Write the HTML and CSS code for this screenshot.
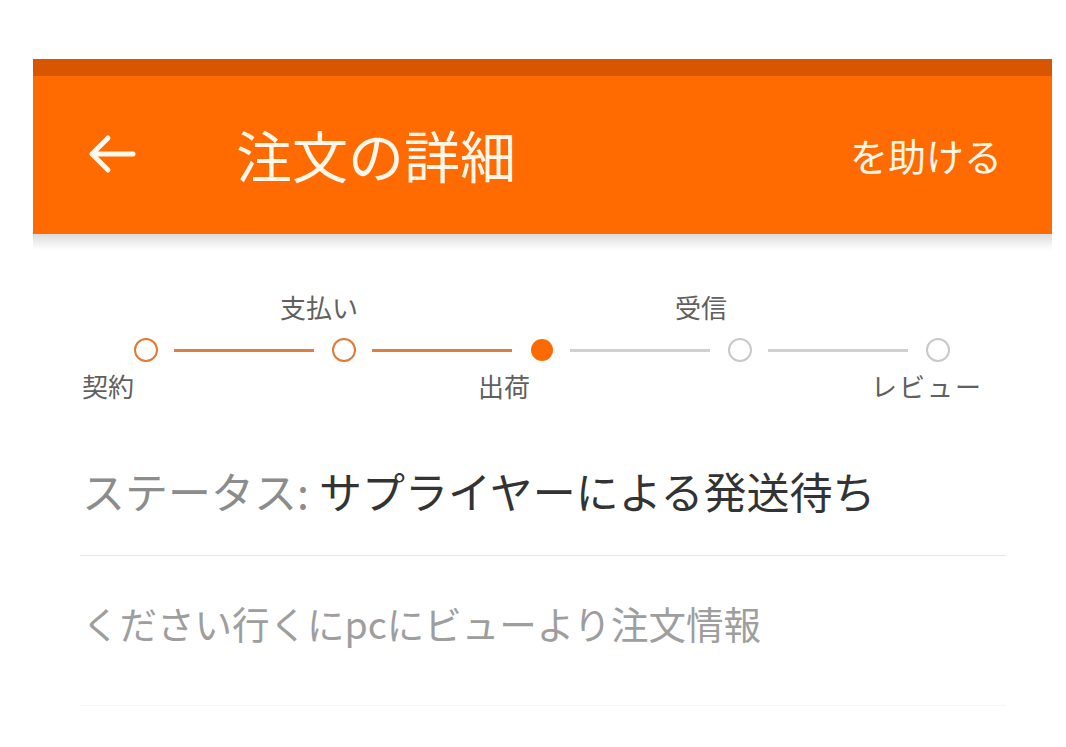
FILE: index.html
```html
<!DOCTYPE html>
<html lang="ja">
<head>
<meta charset="utf-8">
<title>注文の詳細</title>
<link rel="stylesheet" href="styles.css">
</head>
<body>
<div class="page">
  <header class="appbar">
    <div class="statusbar"></div>
    <div class="toolbar">
      <svg class="back" viewBox="0 0 48 40" width="48" height="40" aria-hidden="true">
        <path d="M4 20 H45 M20 4 L4 20 L20 36" fill="none" stroke="#fff8ec" stroke-width="5" stroke-linecap="round" stroke-linejoin="round"/>
      </svg>
      <h1 class="title">注文の詳細</h1>
      <span class="help">を助ける</span>
    </div>
  </header>
  <div class="bar-shadow"></div>

  <section class="stepper">
    <div class="labels top">
      <span></span><span>支払い</span><span></span><span>受信</span><span></span>
    </div>
    <div class="track">
      <span class="dot done"></span><span class="line done"></span>
      <span class="dot done"></span><span class="line done"></span>
      <span class="dot active"></span><span class="line"></span>
      <span class="dot"></span><span class="line"></span>
      <span class="dot"></span>
    </div>
    <div class="labels bottom">
      <span>契約</span><span></span><span>出荷</span><span></span><span class="wide">レビュー</span>
    </div>
  </section>

  <section class="info">
    <p class="status"><span class="status-key">ステータス:</span><span class="status-val">サプライヤーによる発送待ち</span></p>
    <div class="divider"></div>
    <p class="hint">ください行くにpcにビューより注文情報</p>
    <div class="divider faint"></div>
  </section>
</div>
</body>
</html>
```
FILE: styles.css
```css
html, body {
  margin: 0;
  padding: 0;
  background: #ffffff;
}
body {
  font-family: "Noto Sans CJK JP", "Noto Sans", Roboto, sans-serif;
  width: 1066px;
  height: 747px;
  overflow: hidden;
}
.page {
  padding-top: 59px;
}
.appbar {
  margin-left: 33px;
  width: 1019px;
  background: #ff6b00;
}
.statusbar {
  height: 17px;
  background: #d95600;
}
.toolbar {
  height: 158px;
  display: flex;
  align-items: center;
  padding: 0 52px 0 55px;
  color: #fff6ea;
}
.back {
  display: block;
  margin-top: -2px;
}
.title {
  margin: -2px 0 0 100px;
  font-size: 56px;
  font-weight: 400;
  line-height: 1;
}
.help {
  margin: -1px -2px 0 auto;
  font-size: 38px;
  line-height: 1;
}
.bar-shadow {
  margin-left: 33px;
  width: 1019px;
  height: 16px;
  background: linear-gradient(#dcdcdc, rgba(255,255,255,0));
}

.stepper {
  margin-top: 42px;
  padding-left: 82px;
}
.labels {
  display: grid;
  grid-template-columns: repeat(5, 198px);
  font-size: 26px;
  line-height: 30px;
  height: 30px;
  color: #606060;
}
.labels.top span:nth-child(4) {
  margin-left: -1px;
}
.labels .wide {
  margin-left: -3px;
  letter-spacing: 2px;
  white-space: nowrap;
}
.track {
  display: flex;
  align-items: center;
  height: 24px;
  margin: 16px 0 9px 52px;
}
.dot {
  box-sizing: border-box;
  width: 24px;
  height: 24px;
  border-radius: 50%;
  border: 2.5px solid #c9c9c9;
  background: #fff;
  flex: none;
}
.dot.done {
  border-color: #e07a34;
}
.dot.active {
  width: 22px;
  height: 22px;
  margin: 0 1px;
  border: none;
  background: #ff6a00;
}
.line {
  flex: none;
  width: 140px;
  height: 3px;
  margin: 0 18px 0 16px;
  background: #d0d0d0;
}
.line.done {
  background: #e07f45;
}

.info {
  margin: 63px 60px 0 80px;
}
.status {
  margin: 0 0 0 2px;
  font-size: 43px;
  line-height: 52px;
}
.status-key {
  color: #8c8c8c;
  margin-right: 10px;
}
.status-val {
  color: #333333;
}
.divider {
  height: 1px;
  background: #e6e6e6;
  margin-top: 39px;
}
.hint {
  margin: 45px 0 0 2px;
  font-size: 37.5px;
  line-height: 44px;
  color: #9e9e9e;
}
.divider.faint {
  margin-top: 60px;
  background: #f6f6f6;
}
```
